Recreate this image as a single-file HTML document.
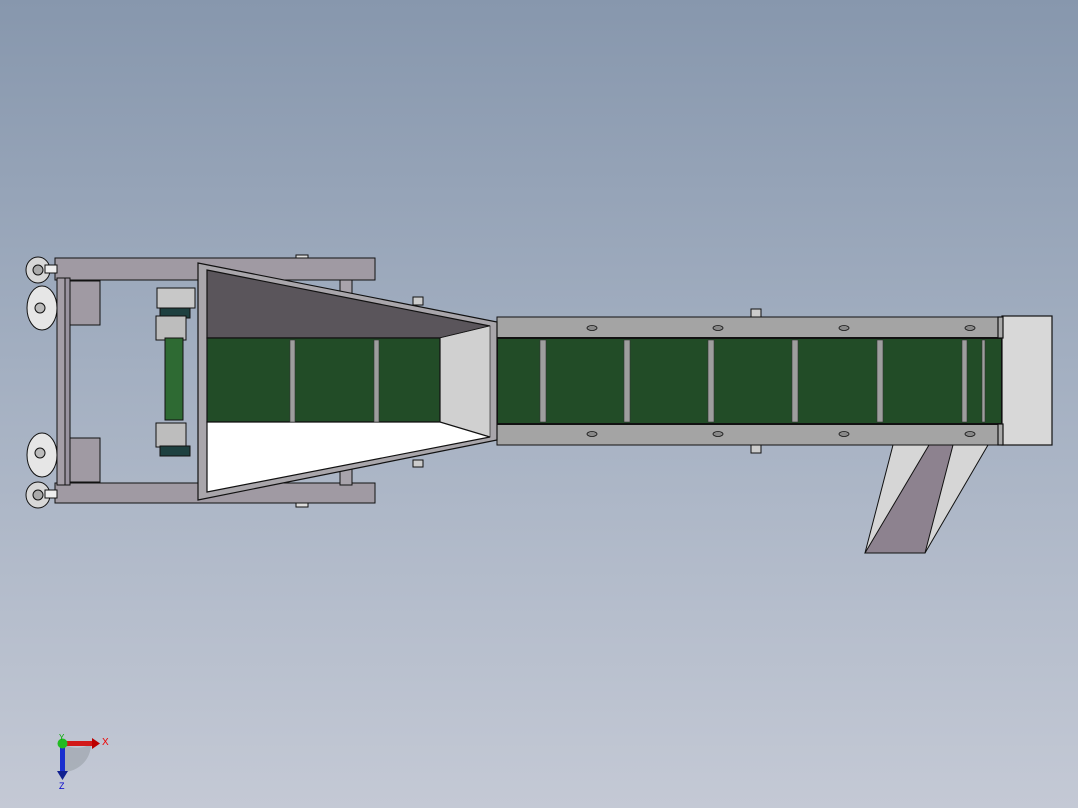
<!DOCTYPE html>
<html><head><meta charset="utf-8"><style>
html,body{margin:0;padding:0;width:1078px;height:808px;overflow:hidden}
body{background:linear-gradient(#8797ad 0%,#a3afc1 45%,#c4c9d5 100%)}
svg{position:absolute;left:0;top:0}
</style></head><body>
<svg width="1078" height="808" viewBox="0 0 1078 808" xmlns="http://www.w3.org/2000/svg" font-family="Liberation Sans, sans-serif">
<g stroke="#111" stroke-width="1">
<!-- back pivot bits -->
<rect x="296" y="255" width="12" height="6" fill="#ddd"/>
<rect x="296" y="501" width="12" height="6" fill="#ddd"/>
<rect x="413" y="297" width="10" height="8" fill="#ccc"/>
<rect x="413" y="460" width="10" height="7" fill="#ccc"/>
<rect x="751" y="309" width="10" height="8" fill="#ccc"/>
<rect x="751" y="445" width="10" height="8" fill="#ccc"/>
<!-- left frame -->
<rect x="55" y="258" width="320" height="22" fill="#a09aa3"/>
<rect x="55" y="483" width="320" height="20" fill="#a09aa3"/>
<rect x="57" y="278" width="8" height="207" fill="#a59fa8"/>
<rect x="65" y="278" width="5" height="207" fill="#9a94a0"/>
<rect x="70" y="281" width="30" height="44" fill="#a09aa3"/>
<rect x="70" y="438" width="30" height="44" fill="#a09aa3"/>
<rect x="340" y="280" width="12" height="205" fill="#a8a3ab"/>
<!-- casters -->
<ellipse cx="38" cy="270" rx="12" ry="13" fill="#d8d8d8"/><circle cx="38" cy="270" r="5" fill="#aaa"/>
<rect x="45" y="265" width="12" height="8" fill="#eee"/>
<ellipse cx="38" cy="495" rx="12" ry="13" fill="#d8d8d8"/><circle cx="38" cy="495" r="5" fill="#aaa"/>
<rect x="45" y="490" width="12" height="8" fill="#eee"/>
<ellipse cx="42" cy="308" rx="15" ry="22" fill="#e6e6e6"/><circle cx="40" cy="308" r="5" fill="#bbb"/>
<ellipse cx="42" cy="455" rx="15" ry="22" fill="#e6e6e6"/><circle cx="40" cy="453" r="5" fill="#bbb"/>
<!-- drive -->
<rect x="157" y="288" width="38" height="20" fill="#c8c8c8"/>
<rect x="160" y="308" width="30" height="10" fill="#1e4040"/>
<rect x="156" y="316" width="30" height="24" fill="#bdbdbd"/>
<rect x="165" y="338" width="18" height="82" fill="#2e6a33"/>
<rect x="156" y="423" width="30" height="24" fill="#bdbdbd"/>
<rect x="160" y="446" width="30" height="10" fill="#1e4040"/>
<!-- conveyor -->
<rect x="497" y="317" width="505" height="21" fill="#a4a4a4"/>
<rect x="497" y="424" width="505" height="21" fill="#a4a4a4"/>
<rect x="497" y="338" width="505" height="86" fill="#224c27" stroke-width="2"/>
</g>
<g fill="#9e9e9e" stroke="#333" stroke-width="0.6">
<rect x="540" y="340" width="6" height="82"/><rect x="624" y="340" width="6" height="82"/>
<rect x="708" y="340" width="6" height="82"/><rect x="792" y="340" width="6" height="82"/>
<rect x="877" y="340" width="6" height="82"/><rect x="962" y="340" width="5" height="82"/>
<rect x="982" y="340" width="3" height="82"/>
</g>
<g fill="#888" stroke="#111" stroke-width="0.8">
<ellipse cx="592" cy="328" rx="5" ry="2.5"/><ellipse cx="718" cy="328" rx="5" ry="2.5"/><ellipse cx="844" cy="328" rx="5" ry="2.5"/><ellipse cx="970" cy="328" rx="5" ry="2.5"/>
<ellipse cx="592" cy="434" rx="5" ry="2.5"/><ellipse cx="718" cy="434" rx="5" ry="2.5"/><ellipse cx="844" cy="434" rx="5" ry="2.5"/><ellipse cx="970" cy="434" rx="5" ry="2.5"/>
</g>
<g stroke="#111" stroke-width="1.2">
<rect x="1002" y="316" width="50" height="129" fill="#d8d8d8"/>
<rect x="998" y="317" width="5" height="21" fill="#aaa"/><rect x="998" y="424" width="5" height="21" fill="#aaa"/>
<!-- leg -->
<polygon points="893,445 988,445 925,553 865,553" fill="#d6d6d6" stroke-width="1"/>
<polygon points="929,445 953,445 925,553 865,553" fill="#8d828f" stroke-width="1"/>
<!-- hopper -->
<polygon points="198,263 497,322 497,440 198,500" fill="#a9a6ab"/>
<polygon points="207,270 490,326 440,338 207,338" fill="#5a555b"/>
<polygon points="440,338 490,326 490,437 440,422" fill="#d0d0d0" stroke-width="0.6"/>
<rect x="207" y="338" width="233" height="84" fill="#224c27"/>
<polygon points="207,422 440,422 490,437 207,492" fill="#ffffff"/>
</g>
<g fill="#9e9e9e" stroke="#333" stroke-width="0.6">
<rect x="290" y="340" width="5" height="82"/><rect x="374" y="340" width="5" height="82"/>
</g>
<!-- axis triad -->
<g>
<path d="M63,744 A28,28 0 0 0 91,744 L91,744 A28,28 0 0 1 63,772 Z" fill="#9aa0a8" opacity="0.6"/>
<rect x="63" y="741" width="30" height="5" fill="#d21818"/>
<polygon points="92,738 100,743.5 92,749" fill="#b00"/>
<rect x="60" y="744" width="5" height="28" fill="#1a2fcf"/>
<polygon points="57,771 68,771 62.5,780" fill="#10208f"/>
<circle cx="62.5" cy="743.5" r="5" fill="#22bb22"/>
<text x="102" y="745" font-size="10" fill="#e00">X</text>
<text x="59" y="789" font-size="9" fill="#00c">Z</text>
<text x="59" y="740" font-size="8" fill="#0a0">Y</text>
</g>
</svg>
</body></html>
